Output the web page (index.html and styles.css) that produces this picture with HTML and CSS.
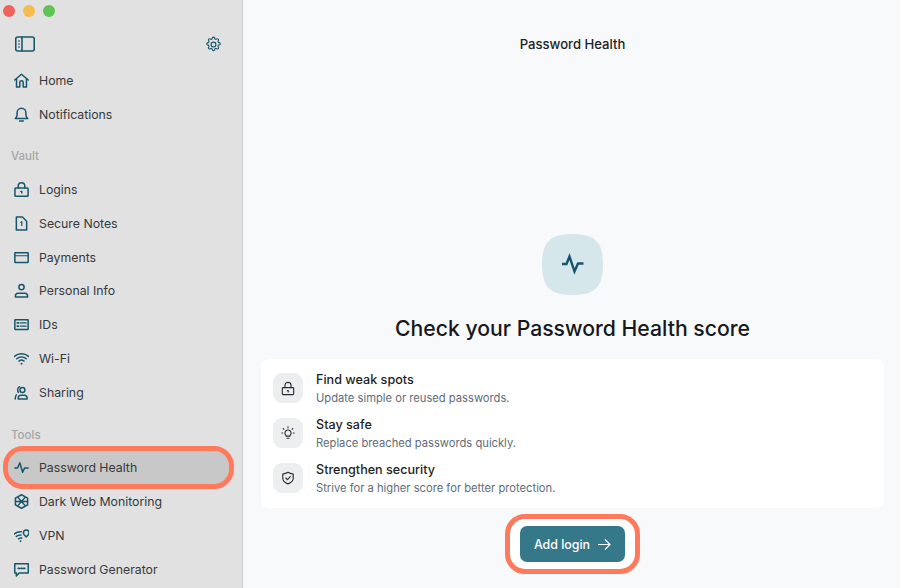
FILE: index.html
```html
<!DOCTYPE html>
<html lang="en">
<head>
  <meta charset="UTF-8" />
  <title>Password Health</title>
  <link rel="stylesheet" href="styles.css">
</head>
<body>
  <!-- Sidebar -->
  <div class="sidebar">
    <div class="traffic">
      <span class="dot red"></span>
      <span class="dot yellow"></span>
      <span class="dot green"></span>
    </div>
    <div class="toolbar">
      <svg class="icon toggle" width="20" height="16" viewBox="0 0 20 16"><rect x="0.75" y="1" width="18.5" height="14" rx="2"/><path d="M7 1v14"/><path d="M4 4.5v1M4 7.500v1M4 10.500v1" stroke-width="1.200"/></svg>
      <svg class="icon" width="17" height="17" viewBox="0 0 24 24" stroke-width="2.200"><path d="M10.300 3.300a1.700 1.700 0 0 1 3.400 0 1.700 1.700 0 0 0 2.600 1.100 1.700 1.700 0 0 1 2.400 2.400 1.700 1.700 0 0 0 1.100 2.600 1.700 1.700 0 0 1 0 3.400 1.700 1.700 0 0 0-1.100 2.600 1.700 1.700 0 0 1-2.400 2.400 1.700 1.700 0 0 0-2.600 1.100 1.700 1.700 0 0 1-3.400 0 1.700 1.700 0 0 0-2.600-1.100 1.700 1.700 0 0 1-2.400-2.400 1.700 1.700 0 0 0-1.100-2.600 1.700 1.700 0 0 1 0-3.400 1.700 1.700 0 0 0 1.100-2.600 1.700 1.700 0 0 1 2.400-2.400 1.700 1.700 0 0 0 2.600-1.100z"/><circle cx="12" cy="12" r="3.400"/></svg>
    </div>

    <div class="nav">
      <div class="item">
        <svg class="icon" viewBox="0 0 16 16"><path d="M.8 7.500 8 1.300l7.200 6.200"/><path d="M2.700 6.500v8.300h3.500v-4.800a1.800 1.800 0 0 1 3.600 0v4.800h3.500V6.500"/></svg>
        <span>Home</span>
      </div>
      <div class="item">
        <svg class="icon" viewBox="0 0 16 16"><path d="M1.300 12.300c1.300-1 2-2.200 2-4V6a4.700 4.700 0 0 1 9.400 0v2.300c0 1.800.7 3 2 4z"/><path d="M6 14.800h4"/></svg>
        <span>Notifications</span>
      </div>

      <div class="group">Vault</div>
      <div class="item">
        <svg class="icon" viewBox="0 0 16 16" stroke-width="1.800"><rect x="1" y="6.500" width="14" height="8.700" rx="0.800"/><path d="M4.500 6.500V4.300a3.500 3.500 0 0 1 7 0v2.200"/><path d="M7.300 10h1v1.700" stroke-width="1.500"/></svg>
        <span>Logins</span>
      </div>
      <div class="item">
        <svg class="icon" viewBox="0 0 16 16" stroke-width="1.800"><path d="M2.500 1h6.500l4.500 4.500V15h-11z"/><path d="M7.300 6.800 8.300 6v4" stroke-width="1.300"/></svg>
        <span>Secure Notes</span>
      </div>
      <div class="item">
        <svg class="icon" viewBox="0 0 16 16" stroke-width="1.800"><rect x="0.900" y="2.800" width="14.200" height="10.400" rx="0.300"/><path d="M1 6.200h14" stroke-width="1.200"/></svg>
        <span>Payments</span>
      </div>
      <div class="item">
        <svg class="icon" viewBox="0 0 16 16"><circle cx="8" cy="4.300" r="2.800"/><path d="M1.500 14.800v-1a3 3 0 0 1 3-3h7a3 3 0 0 1 3 3v1z"/></svg>
        <span>Personal Info</span>
      </div>
      <div class="item">
        <svg class="icon" viewBox="0 0 16 16" stroke-width="1.800"><rect x="0.900" y="2.800" width="14.200" height="10.400" rx="0.300"/><path d="M3.500 6.300h1.500M3.500 9.700h1.500" stroke-width="1.800"/><path d="M7 6.300h6M7 9.700h6" stroke-width="1.300"/></svg>
        <span>IDs</span>
      </div>
      <div class="item">
        <svg class="icon" viewBox="0 0 16 16"><path d="M.5 5.800c4.200-3.700 10.800-3.700 15 0"/><path d="M2.900 8.300c3-2.500 7.200-2.500 10.200 0"/><path d="M5.300 10.700c1.600-1.200 3.800-1.200 5.400 0"/><circle cx="8" cy="13.500" r="1.100" class="solid"/></svg>
        <span>Wi-Fi</span>
      </div>
      <div class="item">
        <svg class="icon" viewBox="0 0 16 16"><circle cx="9" cy="5.300" r="2.600"/><path d="M4.500 14.800v-.8a3 3 0 0 1 3-3h3.500a3 3 0 0 1 3 3v.8z"/><path d="M5.800 1.800C3.600 3.300 3.300 6 4.700 8M2.500 10.500c-.8 1.100-1.200 2.700-1.200 4.300"/></svg>
        <span>Sharing</span>
      </div>

      <div class="group">Tools</div>
      <div class="item active">
        <svg class="icon" viewBox="0 0 16 16"><path d="M1 8.500h2.800L6.200 3l3 10 2.100-4.500H15"/></svg>
        <span>Password Health</span>
      </div>
      <div class="item">
        <svg class="icon" viewBox="0 0 16 16" stroke-width="1.800"><path d="M8 .8 14.500 4.400v7.200L8 15.200 1.500 11.600V4.400z"/><path d="M4.500 4 11.500 12M11.500 4 4.500 12M1.500 8h13" stroke-width="1.400"/></svg>
        <span>Dark Web Monitoring</span>
      </div>
      <div class="item">
        <svg class="icon" viewBox="0 0 16 16" stroke-width="1.700"><path d="M.5 6.300C2.500 4.600 5 3.800 7.800 4"/><path d="M2.500 9c1.400-1.100 3-1.600 5-1.500"/><path d="M4.800 11.500c1-.6 2-.9 3.500-.8"/><circle cx="7" cy="14" r="1" class="solid"/><path d="M13 9.500c-1.500-1.200-3-2.600-3-4.500a3 3 0 0 1 6 0c0 1.900-1.500 3.300-3 4.500z"/></svg>
        <span>VPN</span>
      </div>
      <div class="item">
        <svg class="icon" viewBox="0 0 16 16" stroke-width="1.700"><path d="M.8 1.800h14.400v10H5.500l-3 3v-3H.8z"/><path d="M4.500 6.800h1.200M7.400 6.800h1.200M10.300 6.800h1.200" stroke-width="1.800"/></svg>
        <span>Password Generator</span>
      </div>
    </div>
  </div>

  <!-- Main screen -->
  <div class="main">
    <div class="title">Password Health</div>

    <div class="hero">
      <svg class="hero-icon" width="61" height="61" viewBox="0 0 61 61"><path d="M30.500 0C53 0 61 8 61 30.500S53 61 30.500 61 0 53 0 30.500 8 0 30.500 0z"/><path class="pulse" d="M20 30h4.500l3-7.500 5 15 3.500-8h5.500"/></svg>
      <h1>Check your Password Health score</h1>
    </div>

    <div class="card">
      <div class="row">
        <div class="badge">
          <svg class="badge-svg" width="14" height="15" viewBox="0 0 16 17"><rect x="1.500" y="7.500" width="13" height="8" rx="1"/><path d="M4.500 7.500V5a3.500 3.500 0 0 1 7 0v2.500"/><path d="M7.300 11h1v1.500"/></svg>
        </div>
        <div class="row-text">
          <div class="row-title">Find weak spots</div>
          <div class="row-desc">Update simple or reused passwords.</div>
        </div>
      </div>
      <div class="row">
        <div class="badge">
          <svg class="badge-svg" width="14" height="14" viewBox="0 0 16 16"><path d="M5.700 10.700A3.500 3.500 0 1 1 10.300 10.700V11.500H5.700z"/><path d="M6.800 14h2.400M8 1v1M2.500 3l.7.700M13.500 3l-.7.700M1 8h1M14 8h1"/></svg>
        </div>
        <div class="row-text">
          <div class="row-title">Stay safe</div>
          <div class="row-desc">Replace breached passwords quickly.</div>
        </div>
      </div>
      <div class="row">
        <div class="badge">
          <svg class="badge-svg" width="14" height="14" viewBox="0 0 16 16"><path d="M8 1.500c2 1.300 3.800 1.800 6 2v4.500c0 3.200-2.500 5.500-6 6.700C4.500 13.500 2 11.200 2 8V3.500c2.200-.2 4-.7 6-2z"/><path d="M5.500 8l2 2 3-3.500"/></svg>
        </div>
        <div class="row-text">
          <div class="row-title">Strengthen security</div>
          <div class="row-desc">Strive for a higher score for better protection.</div>
        </div>
      </div>
    </div>

    <div class="add-ring">
      <button class="add">
        Add login
        <svg width="14" height="13" viewBox="0 0 15 14"><path d="M1 7h13M8.500 1.500 14 7l-5.500 5.500"/></svg>
      </button>
    </div>
  </div>
</body>
</html>
```

FILE: styles.css
```css
* {
  margin: 0;
  padding: 0;
  box-sizing: border-box;
}

html, body {
  width: 100%;
  height: 100%;
  overflow: hidden;
}

body {
  display: flex;
  background: #f8f9fb;
  font-family: Inter, 'Noto Sans', sans-serif;
  color: #24272b;
}

.sidebar {
  width: 243px;
  height: 588px;
  flex-shrink: 0;
  background: #e1e1e1;
  border-right: 1px solid #cfcfcf;
  overflow: hidden;
}

.traffic {
  display: flex;
  gap: 8px;
  padding: 5px 0 0 3px;
}

.dot {
  width: 12px;
  height: 12px;
  border-radius: 50%;
}

.red { background: #f0625a; }
.yellow { background: #f7bd4c; }
.green { background: #5ec452; }

.toolbar {
  display: flex;
  align-items: center;
  justify-content: space-between;
  padding: 18px 20px 0 15px;
  height: 36px;
  margin-bottom: 10.500px;
}

.icon {
  flex-shrink: 0;
  fill: none;
  stroke: #17566a;
  stroke-width: 1.600;
  stroke-linejoin: round;
  stroke-linecap: round;
}

.item .icon {
  width: 15px;
  height: 15px;
}

.icon .solid {
  fill: #17566a;
  stroke: none;
}

.nav {
  display: flex;
  flex-direction: column;
}

.item {
  display: flex;
  align-items: center;
  gap: 10px;
  height: 33.900px;
  margin: 0 13px 0 8px;
  padding-left: 6px;
  font-size: 12.300px;
  color: #36393c;
}

.item.active {
  background: #c8c8c8;
  border-radius: 15px;
  outline: 5px solid #ff7a5c;
}

.group {
  height: 24px;
  margin: 13px 0 4px;
  padding-left: 11px;
  line-height: 24px;
  font-size: 11.500px;
  font-weight: 500;
  color: #a5a5a5;
}

.main {
  flex: 1;
  height: 588px;
  display: flex;
  flex-direction: column;
  align-items: center;
  padding: 0 16px 0 18px;
}

.title {
  margin-top: 37px;
  font-size: 13.100px;
  font-weight: 500;
  line-height: 15px;
  color: #1c1f22;
}

.hero {
  display: flex;
  flex-direction: column;
  align-items: center;
  margin-top: 182px;
}

.hero-icon path {
  fill: #d6e7ec;
}

.hero-icon .pulse {
  fill: none;
  stroke: #17566a;
  stroke-width: 2.400;
  stroke-linejoin: miter;
}

h1 {
  margin-top: 20px;
  font-size: 21.200px;
  font-weight: 500;
  line-height: 27px;
  color: #16181b;
}

.card {
  width: 100%;
  margin-top: 17px;
  padding: 14px 12px 15px;
  background: #fff;
  border-radius: 8px;
  display: flex;
  flex-direction: column;
  gap: 15px;
}

.row {
  display: flex;
  align-items: flex-start;
  gap: 13px;
}

.badge {
  width: 30px;
  height: 30px;
  border-radius: 9px;
  background: #eceef0;
  display: flex;
  align-items: center;
  justify-content: center;
}

.badge-svg {
  fill: none;
  stroke: #2a2e33;
  stroke-width: 1.300;
  stroke-linejoin: round;
  stroke-linecap: round;
}

.row-text {
  margin: -1px 0 -3px;
}

.row-title {
  font-size: 12.600px;
  font-weight: 500;
  line-height: 15px;
  color: #1c1f22;
}

.row-desc {
  margin-top: 4px;
  font-size: 11.200px;
  line-height: 14px;
  color: #616c79;
}

.add-ring {
  margin-top: 6px;
  padding: 7px 10px;
  background: #fff;
  border: 5px solid #ff7a5c;
  border-radius: 20px;
}

.add {
  display: flex;
  align-items: center;
  gap: 7px;
  height: 36px;
  padding: 0 14px;
  font-family: inherit;
  font-size: 12.400px;
  font-weight: 500;
  color: #fff;
  background: #35788a;
  border: none;
  border-radius: 7px;
}

.add svg {
  fill: none;
  stroke: #fff;
  stroke-width: 1.300;
}
```
